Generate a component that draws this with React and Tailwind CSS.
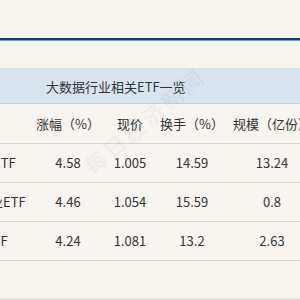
const rows = [
  { name: "大数据ETF", shift: "-ml-[46px]", change: "4.58", price: "1.005", turnover: "14.59", size: "13.24" },
  { name: "大数据产业ETF", shift: "-ml-[62px]", change: "4.46", price: "1.054", turnover: "15.59", size: "0.8" },
  { name: "云计算ETF", shift: "-ml-[54px]", change: "4.24", price: "1.081", turnover: "13.2", size: "2.63" },
];

const cols = "grid grid-cols-[36px_64px_60px_64px_96px] items-center";

export default function App() {
  return (
    <div
      className="relative w-[300px] h-[300px] overflow-hidden bg-[#f8f5f1] text-[13px] text-[#333333]"
      style={{ fontFamily: '"Noto Sans CJK SC", "Noto Sans", sans-serif' }}
    >
      <div className="h-[38px]" />
      <div className="h-[2px] bg-[#0d3f93]" />
      <div className="h-px bg-[#7c97c4]" />
      <div className="h-[27px]" />

      <div className="h-[36px] bg-[#d9e4ef] border-b border-[#c9d1da] flex items-center pl-[46px] pt-[2px]">
        大数据行业相关ETF一览
      </div>

      <div className={`${cols} h-[40px] border-b border-[#d6d2cc] whitespace-nowrap`}>
        <div />
        <div className="text-center">涨幅（%）</div>
        <div className="text-center">现价</div>
        <div className="text-center">换手（%）</div>
        <div className="text-center">规模（亿份）</div>
      </div>

      {rows.map((r) => (
        <div key={r.name} className={`${cols} h-[39px] border-b border-[#d6d2cc] whitespace-nowrap`}>
          <div className="overflow-hidden">
            <div className={r.shift}>{r.name}</div>
          </div>
          <div className="text-center">{r.change}</div>
          <div className="text-center">{r.price}</div>
          <div className="text-center">{r.turnover}</div>
          <div className="text-center">{r.size}</div>
        </div>
      ))}

      <div className="absolute left-0 right-0 bottom-0 h-[2px] bg-[#e3e0dc]" />

      <div className="pointer-events-none absolute left-[64px] top-[104px] w-[160px] text-center -rotate-[40deg] text-[22px] font-bold tracking-[3px] text-[#000000]/[0.05]">
        每日经济新闻
      </div>
    </div>
  );
}
